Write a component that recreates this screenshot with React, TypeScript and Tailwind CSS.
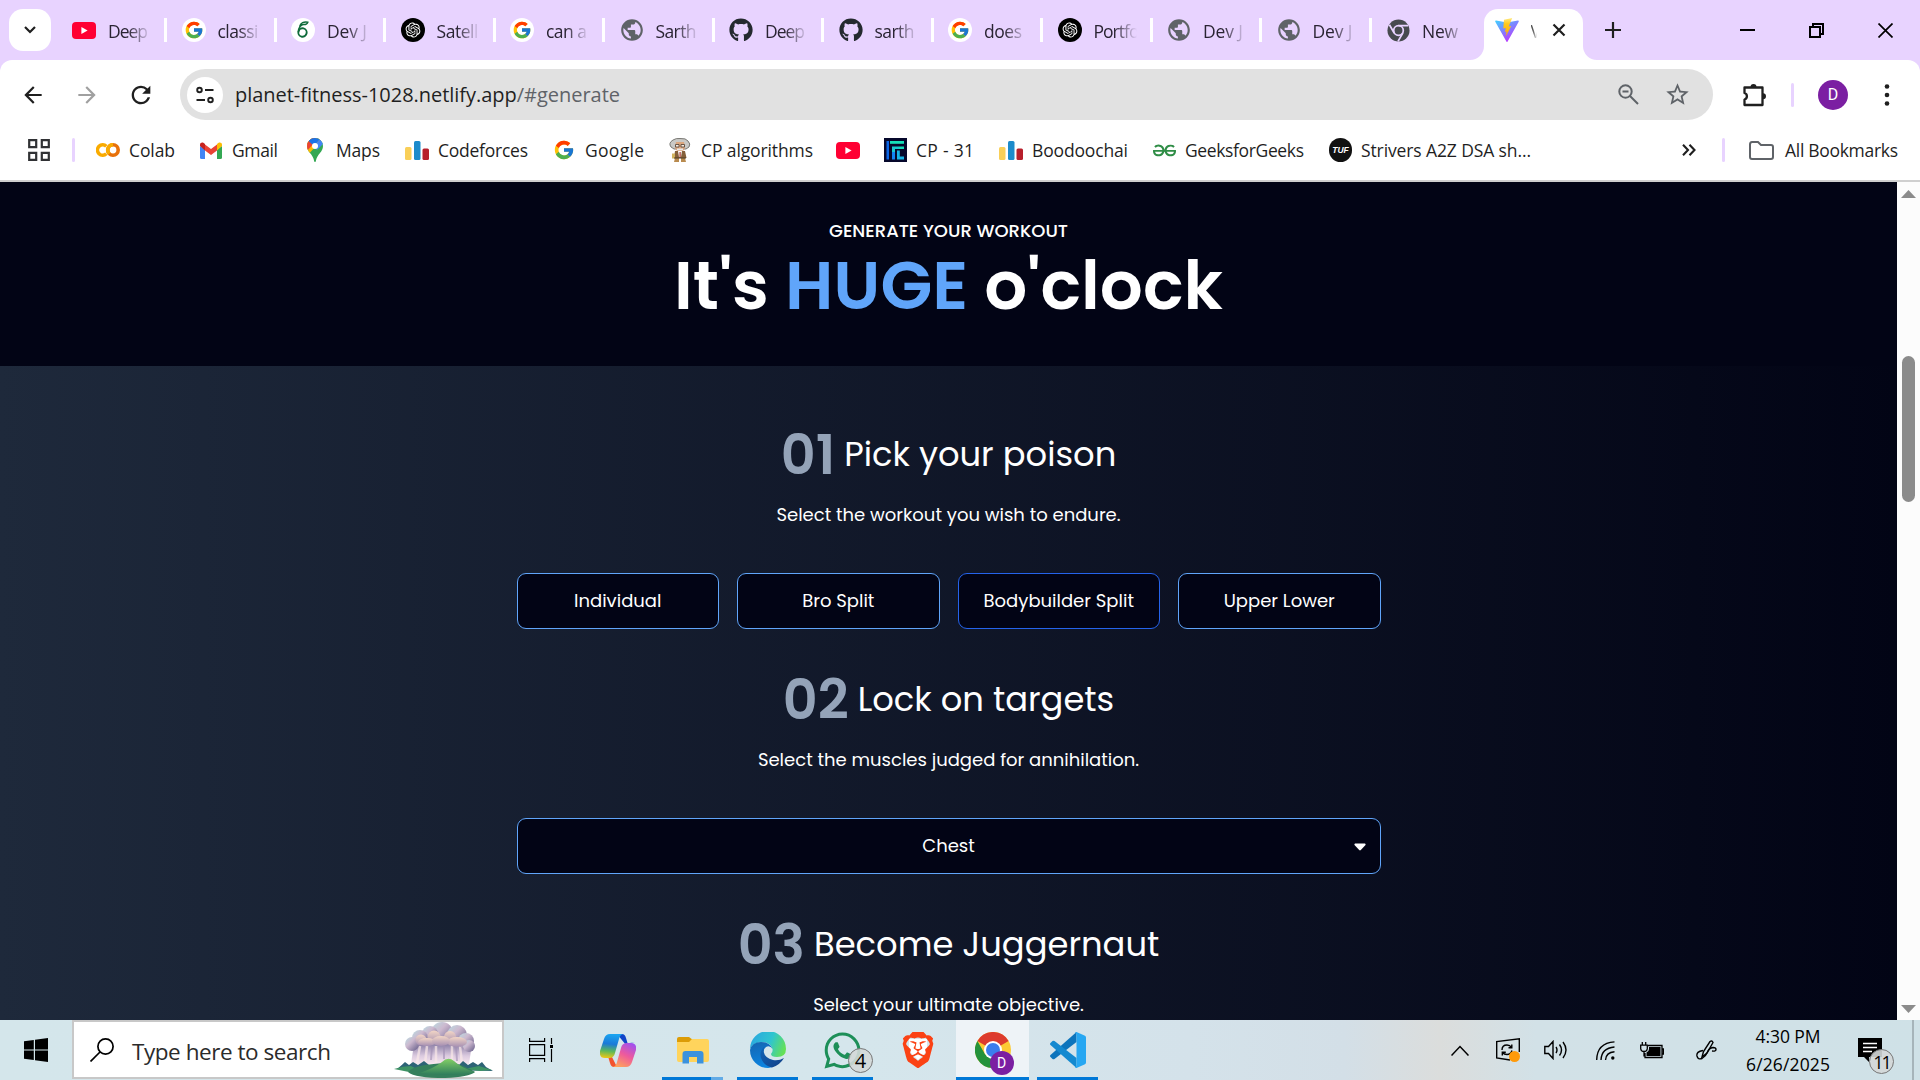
import React, { useLayoutEffect, useRef } from 'react';
import { FcGoogle } from 'react-icons/fc';
import { FaGithub, FaWhatsapp } from 'react-icons/fa';
import { SiBrave, SiGeeksforgeeks } from 'react-icons/si';
import { RiOpenaiFill } from 'react-icons/ri';
import { MdPublic, MdStarBorder, MdArrowBack, MdArrowForward, MdRefresh } from 'react-icons/md';

/* Text whose tracking is adjusted so that it spans a given width. */
function Fit({ w, className = '', children }: { w: number; className?: string; children: React.ReactNode }) {
  const ref = useRef<HTMLSpanElement>(null);
  useLayoutEffect(() => {
    const el = ref.current;
    if (!el) return;
    el.style.letterSpacing = '0px';
    el.style.marginRight = '0px';
    const n = (el.textContent || '').length;
    const ls = (w - el.getBoundingClientRect().width) / Math.max(1, n - 1);
    el.style.letterSpacing = `${ls}px`;
    el.style.marginRight = `${-ls}px`;
  }, [w]);
  return (
    <span ref={ref} className={`inline-block whitespace-pre ${className}`}>
      {children}
    </span>
  );
}

/* ---------- favicons ---------- */

const YouTube = () => (
  <svg viewBox="0 0 24 17" className="h-[17px] w-6">
    <rect width="24" height="17" rx="4" fill="#ff0033" />
    <path d="M9.4 5v7l6.2-3.5z" fill="#fff" />
  </svg>
);
const GoogleTab = () => (
  <span className="flex size-6 items-center justify-center rounded-full bg-white">
    <FcGoogle className="size-[20px]" />
  </span>
);
const Devj = () => (
  <span className="flex size-6 items-center justify-center rounded-full bg-white">
    <svg viewBox="0 0 24 24" className="size-6" fill="none" stroke="#0f6b3a" strokeWidth="1.900">
      <ellipse cx="11.500" cy="14.500" rx="4.200" ry="4.200" transform="rotate(15 11.500 14.500)" />
      <path d="M7.400 14C7.500 9.500 10 6.500 12.500 6.500C15 6.800 16.300 5.500 16.800 4.200C13 3.200 9.500 5 8.700 8.500" strokeWidth="1.500" />
    </svg>
  </span>
);
const OpenAi = () => (
  <span className="flex size-6 items-center justify-center rounded-full bg-black text-white">
    <RiOpenaiFill className="size-[18px]" />
  </span>
);
const Globe = () => <MdPublic className="size-[26px] shrink-0 text-[#5f6368]" />;
const Github = () => <FaGithub className="size-6 text-[#24292f]" />;
const ChromeGray = () => (
  <svg viewBox="0 0 24 24" className="size-[23px]">
    <circle cx="12" cy="12" r="11.500" fill="#474a4f" />
    <circle cx="12" cy="12" r="5" fill="#474a4f" stroke="#e8d3ff" strokeWidth="1.800" />
    <path d="M12 6.800h10M7.500 14.600L2.500 6M16.500 14.600L11.500 23.300" stroke="#e8d3ff" strokeWidth="1.800" />
  </svg>
);
const Vite = () => (
  <svg viewBox="0 0 24 24" className="size-6">
    <defs>
      <linearGradient id="va" x1="0" y1="0" x2=".6" y2="1">
        <stop offset="0" stopColor="#41d1ff" />
        <stop offset="1" stopColor="#bd34fe" />
      </linearGradient>
      <linearGradient id="vb" x1="0" y1="0" x2="0" y2="1">
        <stop offset="0" stopColor="#ffea83" />
        <stop offset=".3" stopColor="#ffca1c" />
        <stop offset="1" stopColor="#ffa800" />
      </linearGradient>
    </defs>
    <path d="M23.700 3.700L12.600 23.600a.700.700 0 0 1-1.200 0L.300 3.700C0 3.100.400 2.500 1 2.600L12 4.600L23 2.600c.600-.100 1 .500.700 1.100z" fill="url(#va)" />
    <path d="M17.200.100L9 1.700l-.700 8.700 2.500-.500-.800 4 1.600-.500-.900 5.200 5.600-10.700-2.600.500z" fill="url(#vb)" />
  </svg>
);

const Colab = () => (
  <svg viewBox="0 0 24 14" className="h-[14px] w-6" fill="none" strokeWidth="3.600">
    <path d="M10.300 3.200A5.200 5.200 0 1 0 10.300 10.800" stroke="#f9ab00" />
    <circle cx="17" cy="7" r="5.200" stroke="#e8710a" />
    <path d="M13.300 10.700A5.200 5.200 0 0 1 17 1.800" stroke="#f9ab00" />
  </svg>
);
const Gmail = () => (
  <svg viewBox="0 0 22 17" className="h-[17px] w-[22px]">
    <path d="M0 4v11.500Q0 17 1.500 17H5V7.500z" fill="#4285f4" />
    <path d="M22 4v11.500q0 1.500-1.500 1.500H17V7.500z" fill="#34a853" />
    <path d="M5 2.500v6l6 4.500 6-4.500v-6L11 7z" fill="#ea4335" />
    <path d="M0 4l5 4.500V2L3.700.900C2.200-.200 0 .600 0 2.500z" fill="#c5221f" />
    <path d="M22 4l-5 4.500V2L18.300.900C19.800-.200 22 .600 22 2.500z" fill="#fbbc04" />
  </svg>
);
const Maps = () => (
  <svg viewBox="0 0 16 24" className="h-6 w-4">
    <defs>
      <clipPath id="pin">
        <path d="M8 0a8 8 0 0 0-8 8c0 3 1.300 4.800 3 7 2 2.500 3.600 4.500 4.200 8.200.200 1.100 1.400 1.100 1.600 0C9.400 19.500 11 17.500 13 15c1.700-2.200 3-4 3-7a8 8 0 0 0-8-8z" />
      </clipPath>
    </defs>
    <g clipPath="url(#pin)">
      <rect width="16" height="24" fill="#34a853" />
      <path d="M0 18L16 0H0z" fill="#fbbc04" />
      <path d="M-1 14L8 4V-1H-1z" fill="#ea4335" />
      <path d="M1 2.500L7 8 14 0H1z" fill="#1a73e8" />
      <path d="M7 8L14 0l3 5-7 7z" fill="#4285f4" />
    </g>
    <circle cx="8" cy="8" r="3" fill="#fff" />
  </svg>
);
const Codeforces = () => (
  <svg viewBox="0 0 24 19" className="h-[19px] w-6">
    <rect y="6" width="6.500" height="13" rx="1.500" fill="#f9cf58" />
    <rect x="9" width="6.500" height="19" rx="1.500" fill="#1c8bcb" />
    <rect x="17.500" y="7.500" width="6.500" height="11.500" rx="1.500" fill="#b71f2b" />
  </svg>
);
const Einstein = () => (
  <svg viewBox="0 0 22 24" className="h-6 w-[22px]">
    <path d="M4 2Q7 0 11 .500Q17 0 19 3Q22 6 20 9L17 11H5L2 9Q-1 5 4 2z" fill="#c9c9c6" stroke="#6d6c68" strokeWidth=".9" />
    <path d="M7 4h8l1 6-2 3H8l-2-3z" fill="#dba67e" />
    <path d="M6.500 6.500h3.500v2.500H6.500zM12 6.500h3.500v2.500H12z" fill="#f6ece2" stroke="#5b4a3c" strokeWidth=".9" />
    <path d="M8 10.500h6v1.800H8z" fill="#e9e9e9" />
    <path d="M6 13h10l1.500 7H5z" fill="#85603a" />
    <path d="M9 13h4l-1 6h-2z" fill="#fff" />
    <path d="M10.500 14h1.200v5h-1.200z" fill="#a8322c" />
    <path d="M6 20h4v4H5zM12 20h4l1 4h-5z" fill="#b98b4f" />
    <path d="M3 15.500h3v5H3z" fill="#d1b35f" />
    <path d="M5 20h12" stroke="#4b3a26" />
  </svg>
);
const Cp31 = () => (
  <svg viewBox="0 0 23 24" className="h-6 w-[23px]">
    <rect width="23" height="24" fill="#06082b" />
    <path d="M2.500 3H5v18.500H2.500z" fill="#0a66e8" />
    <path d="M6 3h14v2.800H6z" fill="#16e0b8" />
    <path d="M8 8.500h7V11h-4v4h-3z" fill="#18c9d0" />
    <path d="M8 14h3v7.500H8z" fill="#1184f2" />
    <path d="M15 8.500h5V11h-5z" fill="#16e0b8" />
    <path d="M13 12.500h2.800v6H20v3h-7z" fill="#16b4e6" />
  </svg>
);
const Tuf = () => (
  <span className="flex h-6 w-[23px] items-center justify-center rounded-full bg-[#111] font-['Liberation_Sans'] text-[8.500px] font-bold italic text-white">
    TUF
  </span>
);

/* ---------- browser chrome ---------- */

const tabs: { icon: React.ReactNode; label: string; w: number }[] = [
  { icon: <YouTube />, label: 'Deep', w: 40 },
  { icon: <GoogleTab />, label: 'classi', w: 41 },
  { icon: <Devj />, label: 'Dev J', w: 40 },
  { icon: <OpenAi />, label: 'Satell', w: 42 },
  { icon: <GoogleTab />, label: 'can a', w: 41 },
  { icon: <Globe />, label: 'Sarth', w: 41 },
  { icon: <Github />, label: 'Deep', w: 40 },
  { icon: <Github />, label: 'sarth', w: 40 },
  { icon: <GoogleTab />, label: 'does', w: 38 },
  { icon: <OpenAi />, label: 'Portfo', w: 46 },
  { icon: <Globe />, label: 'Dev J', w: 40 },
  { icon: <Globe />, label: 'Dev J', w: 40 },
  { icon: <ChromeGray />, label: 'New', w: 36 },
];

function TabStrip() {
  return (
    <div className="flex h-[60px] bg-[#e8d3ff]">
      <div className="ml-[9px] mt-[9px] flex h-[42px] w-[42px] shrink-0 items-center justify-center rounded-[14px] bg-white">
        <svg viewBox="0 0 12 8" className="h-2 w-3" fill="none" stroke="#1f1f1f" strokeWidth="2.200">
          <path d="M1 1l5 5 5-5" />
        </svg>
      </div>
      <div className="ml-[5px] flex">
        {tabs.map((t, i) => (
          <div key={i} className="flex h-[60px] w-[109.500px] shrink-0 items-center">
            <div className="ml-4 flex w-6 shrink-0 items-center justify-center">{t.icon}</div>
            <div className="ml-[12px] mt-[2px] w-[50px] shrink-0 text-[17.500px] leading-6 text-[#2a2433] [mask-image:linear-gradient(to_right,black_20px,transparent_43px)]">
              <Fit w={t.w}>{t.label}</Fit>
            </div>
            {i < 12 && <div className="ml-[6px] h-6 w-[3px] shrink-0 bg-white" />}
          </div>
        ))}
      </div>
      <div className="relative ml-[4px] mt-[9px] flex h-[51px] w-[99px] shrink-0 items-center rounded-t-[14px] bg-white pb-[9px]">
        <svg viewBox="0 0 14 14" className="absolute -left-[14px] bottom-0 size-[14px]">
          <path d="M14 0v14H0A14 14 0 0 0 14 0z" fill="#fff" />
        </svg>
        <svg viewBox="0 0 14 14" className="absolute -right-[14px] bottom-0 size-[14px]">
          <path d="M0 0v14h14A14 14 0 0 1 0 0z" fill="#fff" />
        </svg>
        <div className="ml-[11px] flex">
          <Vite />
        </div>
        <div className="ml-[12px] mt-[2px] w-[12px] text-[17.500px] leading-6 text-[#555] [mask-image:linear-gradient(to_right,black_2px,transparent_6px)]">V</div>
        <svg viewBox="0 0 14 14" className="ml-[9px] size-[14px]" stroke="#1f1f1f" strokeWidth="2.200">
          <path d="M1.500 1.500l11 11M12.500 1.500l-11 11" />
        </svg>
      </div>
      <svg viewBox="0 0 16 16" className="ml-[22px] mt-[22px] size-4" stroke="#1f1f1f" strokeWidth="2.200">
        <path d="M8 0v16M0 8h16" />
      </svg>
      <div className="ml-auto mr-[27px] flex h-[60px] items-center gap-[54px]">
        <svg viewBox="0 0 15 15" className="size-[15px]">
          <path d="M0 6h15v2H0z" />
        </svg>
        <svg viewBox="0 0 15 15" className="size-[15px]" fill="none" stroke="#000" strokeWidth="2">
          <path d="M1 4h10v10H1z" />
          <path d="M4 4V1h10v10h-3" />
        </svg>
        <svg viewBox="0 0 15 15" className="size-[15px]" stroke="#000" strokeWidth="1.700">
          <path d="M.5.500l14 14M14.500.500l-14 14" />
        </svg>
      </div>
    </div>
  );
}

function Toolbar() {
  return (
    <div className="flex h-[69px] items-center rounded-t-[12px] bg-white">
      <MdArrowBack className="ml-[20px] size-[26px] text-[#1f1f1f]" />
      <MdArrowForward className="ml-[28px] size-[26px] text-[#a0a0a0]" />
      <MdRefresh className="ml-[27px] size-[28px] text-[#1f1f1f]" />
      <div className="ml-[25px] flex h-[51px] w-[1533px] items-center rounded-full bg-[#e1e1e1]">
        <div className="ml-[7px] flex size-9 items-center justify-center rounded-full bg-white">
          <svg viewBox="0 0 18 18" className="size-[18px]" fill="none" stroke="#1f1f1f" strokeWidth="1.900">
            <circle cx="3.500" cy="4" r="2.300" />
            <path d="M9 4h8.500M.500 14H9" />
            <circle cx="14.500" cy="14" r="2.300" />
          </svg>
        </div>
        <span className="ml-[12px] text-[20px] leading-[30px] text-[#1f1f1f]">
          <Fit w={385}>
            planet-fitness-1028.netlify.app<span className="text-[#5f6368]">/#generate</span>
          </Fit>
        </span>
        <svg viewBox="0 0 21 21" className="ml-auto size-[21px]" fill="none" stroke="#5f6368" strokeWidth="2">
          <circle cx="7.500" cy="7.500" r="6.200" />
          <path d="M12 12l8 8M4.500 7.500h6" />
        </svg>
        <MdStarBorder className="ml-[25px] mr-[22px] size-[27px] text-[#5f6368]" />
      </div>
      <svg viewBox="0 0 26 26" className="ml-[28px] size-[26px]">
        <path d="M3.500 5.500H21.500V23H3.500V17.500A3.400 3.400 0 0 0 3.500 11z" fill="none" stroke="#1f1f1f" strokeWidth="2.300" strokeLinejoin="round" />
        <path d="M9.500 5a3 3 0 0 1 6 0zM22 11.300a3 3 0 0 1 0 6z" fill="#1f1f1f" />
      </svg>
      <div className="ml-[24px] h-6 w-[3px] rounded-full bg-[#e8d3ff]" />
      <div className="ml-[24px] flex size-[30px] items-center justify-center rounded-full bg-[#7b1fa2] font-[Roboto] text-[16px] text-white">D</div>
      <svg viewBox="0 0 6 26" className="ml-[36px] h-[26px] w-[6px]" fill="#1f1f1f">
        <circle cx="3" cy="4.500" r="2.300" />
        <circle cx="3" cy="13" r="2.300" />
        <circle cx="3" cy="21.500" r="2.300" />
      </svg>
    </div>
  );
}

const BookmarkText = ({ w, children }: { w: number; children: string }) => (
  <Fit w={w} className="-mt-px text-[17.500px] leading-6 text-[#1f1f1f]">
    {children}
  </Fit>
);

function Bookmarks() {
  return (
    <div className="flex h-[53px] items-start border-b-2 border-[#cfcfcf] bg-white pt-[9px]">
      <div className="flex h-6 w-full items-center">
        <svg viewBox="0 0 22 22" className="ml-[28px] size-[22px]" fill="none" stroke="#303134" strokeWidth="2.200">
          <path d="M1.200 1.200h7v7h-7zM13.800 1.200h7v7h-7zM1.200 13.800h7v7h-7zM13.800 13.800h7v7h-7z" />
        </svg>
        <div className="ml-[22px] h-6 w-[3px] rounded-full bg-[#e8d3ff]" />
        <div className="ml-[21px] flex items-center gap-[9px]"><Colab /><BookmarkText w={46}>Colab</BookmarkText></div>
        <div className="ml-[25px] flex items-center gap-[10px]"><Gmail /><BookmarkText w={46}>Gmail</BookmarkText></div>
        <div className="ml-[29px] flex items-center gap-[13px]"><Maps /><BookmarkText w={44}>Maps</BookmarkText></div>
        <div className="ml-[25px] flex items-center gap-[9px]"><Codeforces /><BookmarkText w={90}>Codeforces</BookmarkText></div>
        <div className="ml-[25px] flex items-center gap-[10px]"><FcGoogle className="size-[22px]" /><BookmarkText w={59}>Google</BookmarkText></div>
        <div className="ml-[25px] flex items-center gap-[10px]"><Einstein /><BookmarkText w={112}>CP algorithms</BookmarkText></div>
        <div className="ml-[23px] flex items-center"><YouTube /></div>
        <div className="ml-[24px] flex items-center gap-[9px]"><Cp31 /><BookmarkText w={58}>CP - 31</BookmarkText></div>
        <div className="ml-[25px] flex items-center gap-[9px]"><Codeforces /><BookmarkText w={96}>Boodoochai</BookmarkText></div>
        <div className="ml-[25px] flex items-center gap-[9px]"><SiGeeksforgeeks className="size-[23px] text-[#2f8d46]" /><BookmarkText w={119}>GeeksforGeeks</BookmarkText></div>
        <div className="ml-[25px] flex items-center gap-[9px]"><Tuf /><BookmarkText w={170}>Strivers A2Z DSA sh...</BookmarkText></div>
        <svg viewBox="0 0 14 12" className="ml-auto mr-[26px] h-3 w-[14px] shrink-0" fill="none" stroke="#1f1f1f" strokeWidth="2.100">
          <path d="M1 .800L6 6 1 11.200M7.500.800l5 5.200-5 5.200" />
        </svg>
        <div className="h-6 w-[3px] shrink-0 rounded-full bg-[#e8d3ff]" />
        <svg viewBox="0 0 25 19" className="ml-[24px] h-[19px] w-[25px] shrink-0" fill="none" stroke="#5f6368" strokeWidth="2">
          <path d="M1 3.500Q1 1 3 1h6l3 3h10q2 0 2 2v10q0 2-2 2H3q-2 0-2-2z" />
        </svg>
        <div className="ml-[11px] mr-[22px] flex"><BookmarkText w={113}>All Bookmarks</BookmarkText></div>
      </div>
    </div>
  );
}

/* ---------- page ---------- */

function Step({ n, title, sub, children }: { n: string; title: string; sub: string; children?: React.ReactNode }) {
  return (
    <section className="mb-[38px] flex w-[864px] shrink-0 flex-col items-center">
      <div className="flex h-[66px] items-center gap-[9px]">
        <span className="text-[54px] font-semibold leading-[54px] text-[#94a3b8]">{n}</span>
        <h2 className="text-[33.750px] leading-[40px] text-white">{title}</h2>
      </div>
      <p className="mt-3 h-[29px] text-[18px] leading-[29px] text-white">{sub}</p>
      <div className="mt-11 w-full">{children}</div>
    </section>
  );
}

const splits = [
  { label: 'Individual', active: false },
  { label: 'Bro Split', active: false },
  { label: 'Bodybuilder Split', active: true },
  { label: 'Upper Lower', active: false },
];

function Page() {
  return (
    <div className="flex h-[838px] overflow-hidden">
      <div className="flex w-[1897px] flex-col overflow-hidden font-[Poppins,Inter,sans-serif]">
        <header className="flex h-[184px] shrink-0 flex-col items-center bg-[#020415] pt-[35px] text-white">
          <p className="text-[18px] font-medium leading-[27px]">GENERATE YOUR WORKOUT</p>
          <h1 className="mt-[6px] h-[72px] whitespace-pre text-[67.500px] font-semibold leading-[72px]">
            It's <span className="text-[#60a5fa]">HUGE</span> o'clock
          </h1>
        </header>
        <main className="flex h-[654px] flex-col items-center overflow-hidden bg-linear-to-r/srgb from-[#1e293b] to-[#020415] pt-[56px]">
          <Step n="01" title="Pick your poison" sub="Select the workout you wish to endure.">
            <div className="grid grid-cols-4 gap-[18px]">
              {splits.map((s) => (
                <button
                  key={s.label}
                  className={`h-14 rounded-[9px] border bg-[#020415] text-[18px] leading-[28px] text-white ${s.active ? 'border-[#2563eb]' : 'border-[#60a5fa]'}`}
                >
                  {s.label}
                </button>
              ))}
            </div>
          </Step>
          <Step n="02" title="Lock on targets" sub="Select the muscles judged for annihilation.">
            <div className="relative flex h-14 items-center justify-center rounded-[9px] border border-[#60a5fa] bg-[#020415] text-[18px] leading-[28px] text-white">
              Chest
              <svg viewBox="0 0 12 8" className="absolute right-[14px] top-[24px] h-2 w-3" fill="#fff">
                <path d="M1 .500h10q1 .500.500 1.500L6.800 7q-.800.800-1.600 0L.500 2Q0 1 1 .500z" />
              </svg>
            </div>
          </Step>
          <Step n="03" title="Become Juggernaut" sub="Select your ultimate objective." />
        </main>
      </div>
      <div className="flex w-[23px] flex-col items-center bg-[#fcfcfc]">
        <svg viewBox="0 0 15 8" className="mt-2 h-2 w-[15px]"><path d="M7.500 0L15 8H0z" fill="#8b8b8b" /></svg>
        <div className="mt-[158px] h-[146px] w-[13px] rounded-full bg-[#8b8b8b]" />
        <svg viewBox="0 0 15 8" className="mb-[7px] mt-auto h-2 w-[15px]"><path d="M7.500 8L15 0H0z" fill="#8b8b8b" /></svg>
      </div>
    </div>
  );
}

/* ---------- taskbar ---------- */

const RainCloud = () => (
  <svg viewBox="0 0 100 56" className="h-[56px] w-[100px]">
    <defs>
      <linearGradient id="cl" x1="0" y1="0" x2="1" y2="1">
        <stop offset="0" stopColor="#b9dde2" />
        <stop offset=".4" stopColor="#cdb9cf" />
        <stop offset="1" stopColor="#5f5885" />
      </linearGradient>
      <linearGradient id="cf" x1="0" y1="0" x2="0" y2="1">
        <stop offset="0" stopColor="#f3d6c6" />
        <stop offset="1" stopColor="#a58fb2" />
      </linearGradient>
      <linearGradient id="rn" x1="0" y1="0" x2="0" y2="1">
        <stop offset="0" stopColor="#8b7fa6" />
        <stop offset=".6" stopColor="#dccbe0" />
        <stop offset="1" stopColor="#f7e6ee" />
      </linearGradient>
      <linearGradient id="hl" x1="0" y1="0" x2="0" y2="1">
        <stop offset="0" stopColor="#83cf66" />
        <stop offset="1" stopColor="#2f7d5c" />
      </linearGradient>
    </defs>
    <path d="M20 22h58l-3 20H17z" fill="url(#rn)" />
    <path d="M26 24l-3 17M33 24l-2 18M42 24v17M58 24v17M66 24l2 18" stroke="#fae9e8" strokeWidth="2.500" opacity=".7" />
    <path d="M50 24v13M38 24l-1 14M62 24l1 15" stroke="#a08eb3" strokeWidth="2" opacity=".6" />
    <g fill="url(#cl)">
      <circle cx="48" cy="11" r="11" />
      <circle cx="36" cy="12" r="8" />
      <circle cx="63" cy="13" r="10" />
      <circle cx="26" cy="16" r="8" />
      <circle cx="18" cy="22" r="7" />
      <circle cx="72" cy="19" r="8" />
      <circle cx="75" cy="24" r="6" />
    </g>
    <g fill="url(#cf)">
      <circle cx="27" cy="18" r="5.500" />
      <circle cx="40" cy="15" r="6.500" />
      <ellipse cx="33" cy="20" rx="9" ry="4" />
      <circle cx="56" cy="15" r="6" />
      <ellipse cx="63" cy="20" rx="10" ry="5" />
      <ellipse cx="47" cy="19" rx="9" ry="5" />
    </g>
    <path d="M3 47q5-4 8-7l4 3 4-3 5 3 6-4 5 4h30l4-4 5 4 5-3 5 3 4-3 4 5 7 4z" fill="#2d6376" />
    <path d="M0 47q9-3 17-3l10 5-12 1zM70 47l15-3 13 4-12 1z" fill="#3e9264" />
    <path d="M14 50q4-5 17-7 12-2 30-2 12 4 20 9-6 5-30 6-30 0-37-6z" fill="#357f5c" />
    <path d="M26 51q14-5 22-11 6-6 12-1 7 7 21 11-18 5-55 1z" fill="url(#hl)" />
  </svg>
);

const Copilot = () => (
  <svg viewBox="0 0 36 33" className="h-[33px] w-9">
    <defs>
      <linearGradient id="c1" x1="0.300" y1="0" x2=".2" y2="1">
        <stop offset="0" stopColor="#1aa4f0" />
        <stop offset=".4" stopColor="#1b79d8" />
        <stop offset=".7" stopColor="#5cb85a" />
        <stop offset="1" stopColor="#f3c812" />
      </linearGradient>
      <linearGradient id="c2" x1=".8" y1="0" x2=".3" y2="1">
        <stop offset="0" stopColor="#9f50f0" />
        <stop offset=".5" stopColor="#ee5a9c" />
        <stop offset="1" stopColor="#ffa35c" />
      </linearGradient>
    </defs>
    <path d="M17 0h5q3 0 4 4l1.500 5H35q-7-1-9 2z" fill="#1144c8" />
    <path d="M17 33h-3q-3 0-4-4L8.500 24H3q7 0 8-3z" fill="#f2542f" />
    <path d="M10 0h14q-4 0-5 5l-4 14q-1 5-6 5H5q-6 0-5-7L4 5q1.500-5 6-5z" fill="url(#c1)" />
    <path d="M26 33H12q4 0 5-5l4-14q1-5 6-5h4q6 0 5 7l-4 12q-1.500 5-6 5z" fill="url(#c2)" />
  </svg>
);

const Explorer = () => (
  <svg viewBox="0 0 32 27" className="h-[27px] w-8">
    <path d="M0 2q0-2 2-2h10l4 3-3 4H0z" fill="#dc9c06" />
    <path d="M0 5h12l3-3h15q2 0 2 2v19q0 2-2 2H2q-2 0-2-2z" fill="#ffd45c" />
    <path d="M5.500 26.500V17q0-3 3-3h15q3 0 3 3v9.500H20V20h-8v6.500z" fill="#3b92dd" />
  </svg>
);

const Edge = () => (
  <svg viewBox="0 0 36 36" className="size-9">
    <defs>
      <linearGradient id="e1" x1="0" y1=".3" x2="1" y2=".6">
        <stop offset="0" stopColor="#2aa8e0" />
        <stop offset=".55" stopColor="#2fc5cf" />
        <stop offset="1" stopColor="#66e155" />
      </linearGradient>
      <linearGradient id="e2" x1="0" y1="0" x2=".3" y2="1">
        <stop offset="0" stopColor="#1565b0" />
        <stop offset="1" stopColor="#0b84e0" />
      </linearGradient>
      <linearGradient id="e3" x1="0" y1="0" x2="1" y2="1">
        <stop offset="0" stopColor="#0f65b8" />
        <stop offset="1" stopColor="#123f86" />
      </linearGradient>
    </defs>
    <path d="M0 17A18 18 0 0 1 36 17Q36 25 27 25Q21 25 21 22Q23 20 22.500 17Q21 11 13 10Q3 10 0 17z" fill="url(#e1)" />
    <path d="M0 18Q2 10 11 10Q20 10 22.500 17Q20 13 16 15Q12 18 14 24Q17 31 26 33Q21 36 18 36A18 18 0 0 1 0 18z" fill="url(#e2)" />
    <path d="M14.500 14.500Q9 19 11 26Q14 34 22 35.500Q30 33 34 26Q29 29 23 28Q15 26 13.700 20Q13.500 17 14.500 14.500z" fill="url(#e3)" />
  </svg>
);

const ChromeColor = () => (
  <svg viewBox="0 0 36 36" className="size-9">
    <circle cx="18" cy="18" r="18" fill="#fcc934" />
    <path d="M18 18L2.400 9A18 18 0 0 1 33.600 9z" fill="#dd3b2e" />
    <path d="M10.200 22.500L2.400 9A18 18 0 0 0 18 36l7.800-13.500z" fill="#23923c" />
    <circle cx="18" cy="18" r="9" fill="#fff" />
    <circle cx="18" cy="18" r="7" fill="#3b7ded" />
  </svg>
);

const VsCode = () => (
  <svg viewBox="0 0 36 36" className="size-9">
    <path d="M26.500 0v10L4.500 27q-1 .700-2 0L.500 25q-1-1 0-2z" fill="#0d74bc" />
    <path d="M26.500 36V26L4.500 9q-1-.700-2 0L.500 11q-1 1 0 2z" fill="#1489d0" />
    <path d="M26.500 0L35 3.800q1 .500 1 1.700v25q0 1.200-1 1.700L26.500 36q-1 0-1.500-1 1.500 0 1.500-2V3q0-2-1.500-2 .500-1 1.500-1z" fill="#27a7f2" />
  </svg>
);

function TaskApp({ children, line = true, active = false, split = false }: { children: React.ReactNode; line?: boolean; active?: boolean; split?: boolean }) {
  return (
    <div className={`flex h-[60px] flex-col items-center ${active ? 'mx-px w-[73px] bg-[#eef3f7]' : 'w-[75px]'}`}>
      <div className="relative flex h-[57px] items-center pt-[3px]">{children}</div>
      {line && (
        <div className={`flex h-[3px] bg-[#0078d7] ${active ? 'w-full' : 'w-[61px]'}`}>
          {split && <div className="ml-auto w-3 bg-[#62abe6]" />}
        </div>
      )}
    </div>
  );
}

function Taskbar() {
  return (
    <div className="flex h-[60px] bg-[linear-gradient(90deg,#d4e6eb_0%,#d5e6ec_45%,#d4e2ea_62%,#d3dfe7_70%,#dbdddc_75%,#d2e1e7_80%,#cfe1e7_100%)]">
      <div className="flex w-[72px] items-center justify-center">
        <svg viewBox="0 0 24 24" className="size-6">
          <path d="M0 3.300L9.800 2v9.500H0zM11 1.800L24 0v11.500H11zM0 12.600h9.800V22L0 20.700zM11 12.600h13V24l-13-1.800z" />
        </svg>
      </div>
      <div className="mr-px flex h-[59px] w-[432px] items-center border-2 border-[#c8c8c8] bg-white">
        <svg viewBox="0 0 24 24" className="ml-[16px] size-6" fill="none" stroke="#000" strokeWidth="1.700">
          <circle cx="15.500" cy="8.500" r="7.600" />
          <path d="M10 14L.500 23.500" />
        </svg>
        <span className="ml-[18px] mt-[5px] text-[22.500px] leading-[30px] text-[#2b2b2b]">
          <Fit w={199}>Type here to search</Fit>
        </span>
        <div className="ml-auto mr-[8px]">
          <RainCloud />
        </div>
      </div>
      <TaskApp line={false}>
        <svg viewBox="0 0 24 24" className="mr-[3px] size-6" fill="none" stroke="#000" strokeWidth="1.200">
          <path d="M.600 0v3.400h15V0M.600 6.600h15v10.800H.600zM.600 24v-3.400h15V24M22.500 0v6M22.500 11v13" />
          <path d="M21 7h3v3h-3z" fill="#000" stroke="none" />
        </svg>
      </TaskApp>
      <TaskApp line={false}><Copilot /></TaskApp>
      <TaskApp split><Explorer /></TaskApp>
      <TaskApp><Edge /></TaskApp>
      <TaskApp>
        <FaWhatsapp className="size-[41px] text-[#1d8f58]" />
        <span className="absolute -right-[10px] bottom-[4px] flex size-[25px] items-center justify-center rounded-full border border-[#777] bg-[#d4d8d8]/90 text-[20px] leading-none text-black">4</span>
      </TaskApp>
      <TaskApp line={false}>
        <svg viewBox="0 0 24 24" className="absolute left-[6px] top-[17px] size-6"><path d="M3 2h18v12l-9 9-9-9z" fill="#fff" /></svg>
        <SiBrave className="relative size-9 text-[#fb4214]" />
      </TaskApp>
      <TaskApp active>
        <ChromeColor />
        <span className="absolute -right-[3px] bottom-[2px] flex size-6 items-center justify-center rounded-full bg-[#7b1fa2] font-[Roboto] text-[14px] text-white">D</span>
      </TaskApp>
      <TaskApp><VsCode /></TaskApp>

      <div className="ml-auto flex items-center">
        <div className="flex w-12 justify-center">
          <svg viewBox="0 0 18 11" className="h-[11px] w-[18px]" fill="none" stroke="#000" strokeWidth="1.500"><path d="M.500 10.500L9 1.500l8.500 9" /></svg>
        </div>
        <div className="flex w-12 justify-center">
          <svg viewBox="0 0 24 24" className="size-6" fill="none" stroke="#000" strokeWidth="1.400">
            <path d="M14 22L.700 20V3.500L23.300.800V14M6 12q0-5 5-5 3 0 4.500 2.500M15.800 6.500v3.300h-3.300M16 12.500q-1 4-5 4-3 0-4.500-2M6.300 17.500v-3.300h3.500" />
            <circle cx="18.500" cy="18.500" r="5.500" fill="#ff9a0a" stroke="none" />
          </svg>
        </div>
        <div className="flex w-12 justify-center">
          <svg viewBox="0 0 24 20" className="h-5 w-6" fill="none" stroke="#000" strokeWidth="1.400">
            <path d="M.800 6.500h3.700L9 1.500v17L4.500 13.500H.800zM12 7q2 3 0 6M15.500 4.500q4 5.500 0 11M19 2q6 8 0 16" />
          </svg>
        </div>
        <div className="flex w-12 justify-center">
          <svg viewBox="0 0 19 19" className="ml-[2px] size-[19px]" fill="none" stroke="#000" strokeWidth="1.400">
            <path d="M.700 19Q1 2 18.500.900M5 19Q5.500 7 18.500 6M9.500 19Q10 11.500 18.500 10.800" />
            <circle cx="16.800" cy="17" r="1.700" fill="#000" stroke="none" />
          </svg>
        </div>
        <div className="flex w-12 justify-center">
          <svg viewBox="0 0 24 17" className="h-[17px] w-6" fill="none" stroke="#000" strokeWidth="1.300">
            <path d="M8 3.500h14v12H5V11M22 7h1.400v5H22M2.300 0v3M5.700 0v3M.700 3.200h6.600v3.500Q7 9.500 4 9.500T.700 6.700zM4 9.500v5" />
            <path d="M9 5h11.500v9H6.500v-3.500Q9 9.500 9 7z" fill="#000" stroke="none" />
          </svg>
        </div>
        <div className="flex w-[60px] justify-center">
          <svg viewBox="0 0 21 20" className="h-5 w-[21px]" fill="none" stroke="#000" strokeWidth="1.400">
            <path d="M6 17L7.500 11.500 14 1.500q2-1.500 3 1L11 13z" />
            <path d="M7 10.500Q0 11.500 1 16q1 4 5 2.500Q10 16 11.500 12T17 7.500q3 0 3 2t-4 1.500" />
          </svg>
        </div>
        <div className="flex w-[104px] flex-col items-center text-[17.500px] leading-[28px] text-black">
          <Fit w={65}>4:30 PM</Fit>
          <Fit w={84}>6/26/2025</Fit>
        </div>
        <div className="relative h-[60px] w-[72px]">
          <svg viewBox="0 0 24 24" className="absolute left-[18px] top-[18px] size-6">
            <path d="M0 0h24v19H11v5l-5-5H0z" />
            <path d="M5 5.500h14M5 9.500h14M5 13.500h9" stroke="#fff" strokeWidth="1.300" />
          </svg>
          <span className="absolute left-[29px] top-[29px] flex size-[25px] items-center justify-center rounded-full border border-[#777] bg-[#d4d8d8]/90 text-[18px] font-medium leading-none tracking-[-2px] text-black">11</span>
        </div>
        <div className="mr-[6px] h-[60px] w-[2px] bg-[#a6b4ba]" />
      </div>
    </div>
  );
}

export default function App() {
  return (
    <div className="flex h-[1080px] w-[1920px] flex-col overflow-hidden bg-[#e8d3ff] font-['Open_Sans',sans-serif]">
      <TabStrip />
      <Toolbar />
      <Bookmarks />
      <Page />
      <Taskbar />
    </div>
  );
}
